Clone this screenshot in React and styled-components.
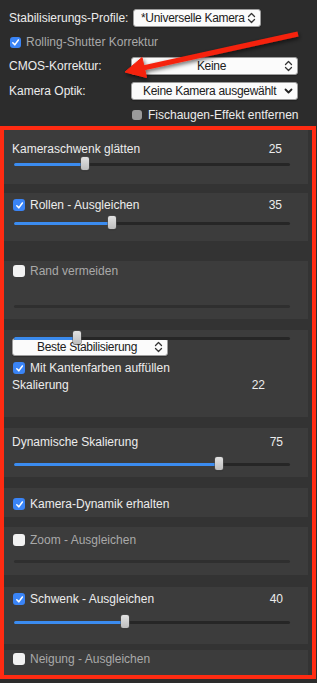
import React from 'react';
import styled, { createGlobalStyle } from 'styled-components';

const GlobalStyle = createGlobalStyle`
    body {
        margin: 0;
        background: #2c2c2c;
        font-family: "Liberation Sans", Arial, sans-serif;
        font-size: 12px;
    }
`;

const Page = styled.div`
    position: relative;
    width: 317px;
    height: 683px;
    background: #2c2c2c;
    overflow: hidden;
    color: #ececec;
`;

const Top = styled.div`
    display: flex;
    flex-direction: column;
    gap: 7px;
    height: 126px;
    padding: 9px 0 0 9px;
    box-sizing: border-box;
`;

const Row = styled.div`
    display: flex;
    align-items: center;
    height: ${p => p.$h || 18}px;
    padding-left: ${p => p.$indent || 0}px;
`;

const FieldLabel = styled.span`
    width: ${p => p.$w}px;
    flex-shrink: 0;
    white-space: nowrap;
`;

const Select = styled.div`
    display: flex;
    align-items: center;
    width: ${p => p.$w}px;
    height: 18px;
    box-sizing: border-box;
    padding: 0 4px 0 ${p => p.$pl || 7}px;
    background: #fbfbfb;
    border: 1px solid #9d9d9d;
    border-radius: 3px;
    color: #202020;
    letter-spacing: -0.3px;
    white-space: nowrap;
    overflow: hidden;
    box-shadow: 0 1px 1px rgba(0, 0, 0, 0.25);
`;

const SelectText = styled.span`
    flex: 1;
    min-width: 0;
    text-align: ${p => (p.$center ? 'center' : 'left')};
    overflow: hidden;
`;

const Box = styled.div`
    width: 316px;
    height: 553px;
    box-sizing: border-box;
    border: 4px solid #ff2b12;
    background: #333333;
    padding-right: 4px;
    display: flex;
    flex-direction: column;
`;

const Section = styled.div`
    flex-shrink: 0;
    height: ${p => p.$h}px;
    margin-top: ${p => p.$gap || 0}px;
    padding: ${p => p.$pt}px 0 0 8px;
    box-sizing: border-box;
    background: #3c3c3c;
    display: flex;
    flex-direction: column;
`;

const Header = styled.div`
    display: flex;
    align-items: center;
    justify-content: space-between;
    height: 16px;
    margin-top: ${p => p.$mt || 0}px;
    padding-right: ${p => (p.$pr === undefined ? 26 : p.$pr)}px;
    color: ${p => (p.$dim ? '#a9a9a9' : '#ececec')};
    white-space: nowrap;
`;

const Label = styled.span`
    display: flex;
    align-items: center;
    gap: 5px;
    color: ${p => (p.$dim ? '#a9a9a9' : 'inherit')};
`;

const SliderWrap = styled.div`
    position: relative;
    z-index: 1;
    display: flex;
    align-items: center;
    height: 14px;
    margin: ${p => p.$mt || 0}px 18px 0 2px;
`;

const Track = styled.div`
    flex: 1;
    height: 3px;
    border-radius: 2px;
    background: ${p => (p.$disabled ? '#2f2f2f' : '#262626')};
    overflow: hidden;
`;

const Fill = styled.div`
    height: 100%;
    background: #3b8cf0;
`;

const Thumb = styled.div`
    position: absolute;
    top: 0;
    width: 8px;
    height: 13px;
    box-sizing: border-box;
    border-radius: 2px;
    background: linear-gradient(#e2e2e2, #bdbdbd);
    box-shadow: 0 0 0 0.5px #555, 0 1px 1px rgba(0, 0, 0, 0.4);
`;

const Box12 = styled.span`
    display: inline-flex;
    align-items: center;
    justify-content: center;
    width: ${p => p.$size || 12}px;
    height: ${p => p.$size || 12}px;
    margin-left: ${p => p.$ml || 0}px;
    flex-shrink: 0;
    border-radius: 3px;
    background: ${p => (p.$checked ? '#3a84f6' : p.$gray ? '#9a9a9a' : '#f2f2f2')};
`;

const SelectRow = styled.div`
    margin-top: ${p => p.$mt || 0}px;
    position: relative;
`;

const ArrowLayer = styled.svg`
    position: absolute;
    left: 0;
    top: 0;
    pointer-events: none;
`;

function Check({ checked, gray, size, ml }) {
    return (
        <Box12 $checked={checked} $gray={gray} $size={size} $ml={ml}>
            {checked && (
                <svg width="9" height="9" viewBox="0 0 10 10">
                    <path d="M2 5.3 L4.2 7.6 L8.2 2.2" fill="none" stroke="#fff" strokeWidth="1.7" strokeLinecap="round" strokeLinejoin="round" />
                </svg>
            )}
        </Box12>
    );
}

function UpDown() {
    return (
        <svg width="9" height="12" viewBox="0 0 9 12">
            <path d="M1.5 4.5 L4.5 1.5 L7.5 4.5 M1.5 7.5 L4.5 10.5 L7.5 7.5" fill="none" stroke="#333" strokeWidth="1.3" strokeLinecap="round" strokeLinejoin="round" />
        </svg>
    );
}

function Down() {
    return (
        <svg width="9" height="8" viewBox="0 0 9 8">
            <path d="M1.5 2.5 L4.5 5.5 L7.5 2.5" fill="none" stroke="#222" strokeWidth="1.8" strokeLinecap="round" strokeLinejoin="round" />
        </svg>
    );
}

function Slider({ value, mt, disabled }) {
    return (
        <SliderWrap $mt={mt}>
            <Track $disabled={disabled}>
                {!disabled && <Fill style={{ width: `calc(${value}% - ${value * 0.08 - 4}px)` }} />}
            </Track>
            {!disabled && <Thumb style={{ left: `calc(${value}% - ${value * 0.08}px)` }} />}
        </SliderWrap>
    );
}

export default function App() {
    return (
        <Page>
            <GlobalStyle />
            <Top>
                <Row>
                    <FieldLabel $w={124}>Stabilisierungs-Profile:</FieldLabel>
                    <Select $w={128}>
                        <SelectText>*Universelle Kamera</SelectText>
                        <UpDown />
                    </Select>
                </Row>
                <Row $h={16}>
                    <Check checked size={11} ml={1} />
                    <Label $dim style={{ marginLeft: 5 }}>Rolling-Shutter Korrektur</Label>
                </Row>
                <Row>
                    <FieldLabel $w={122}>CMOS-Korrektur:</FieldLabel>
                    <Select $w={167}>
                        <SelectText $center>Keine</SelectText>
                        <UpDown />
                    </Select>
                </Row>
                <Row>
                    <FieldLabel $w={122}>Kamera Optik:</FieldLabel>
                    <Select $w={167} $pl={11}>
                        <SelectText>Keine Kamera ausgewählt</SelectText>
                        <Down />
                    </Select>
                </Row>
                <Row $h={16} $indent={123}>
                    <Check gray size={10} />
                    <Label style={{ marginLeft: 6 }}>Fischaugen-Effekt entfernen</Label>
                </Row>
            </Top>

            <Box>
                <Section $h={54} $pt={11}>
                    <Header>
                        <span>Kameraschwenk glätten</span>
                        <span>25</span>
                    </Header>
                    <Slider value={25} />
                </Section>

                <Section $h={48} $gap={9} $pt={4}>
                    <Header>
                        <Label><Check checked ml={1} />Rollen - Ausgleichen</Label>
                        <span>35</span>
                    </Header>
                    <Slider value={35} mt={3} />
                </Section>

                <Section $h={58} $gap={20} $pt={2}>
                    <Header $dim>
                        <Label><Check ml={1} />Rand vermeiden</Label>
                    </Header>
                    <Slider disabled mt={20} />
                </Section>

                <Section $h={87} $gap={11} $pt={1}>
                    <Slider value={22} />
                    <SelectRow $mt={-7}>
                        <Select $w={156}>
                            <SelectText $center>Beste Stabilisierung</SelectText>
                            <UpDown />
                        </Select>
                    </SelectRow>
                    <Header $mt={4}>
                        <Label><Check checked ml={1} />Mit Kantenfarben auffüllen</Label>
                    </Header>
                    <Header $mt={1} $pr={43}>
                        <span>Skalierung</span>
                        <span>22</span>
                    </Header>
                </Section>

                <Section $h={49} $gap={11} $pt={6}>
                    <Header $pr={25}>
                        <span>Dynamische Skalierung</span>
                        <span>75</span>
                    </Header>
                    <Slider value={75} mt={7} />
                </Section>

                <Section $h={29} $gap={11} $pt={8}>
                    <Header>
                        <Label><Check checked ml={1} />Kamera-Dynamik erhalten</Label>
                    </Header>
                </Section>

                <Section $h={48} $gap={10} $pt={5}>
                    <Header $dim>
                        <Label><Check ml={1} />Zoom - Ausgleichen</Label>
                    </Header>
                    <Slider disabled mt={6} />
                </Section>

                <Section $h={57} $gap={12} $pt={4}>
                    <Header $pr={25}>
                        <Label><Check checked ml={1} />Schwenk - Ausgleichen</Label>
                        <span>40</span>
                    </Header>
                    <Slider value={40} mt={8} />
                </Section>

                <Section $h={25} $gap={6} $pt={1}>
                    <Header $dim>
                        <Label><Check ml={1} />Neigung - Ausgleichen</Label>
                    </Header>
                </Section>
            </Box>

            <ArrowLayer width="317" height="130" viewBox="0 0 317 130">
                <defs>
                    <filter id="arrowShadow" x="-20%" y="-50%" width="140%" height="200%">
                        <feDropShadow dx="1" dy="2" stdDeviation="2" floodColor="#000" floodOpacity="0.6" />
                    </filter>
                </defs>
                <g filter="url(#arrowShadow)" fill="#f5230f" stroke="#f5230f">
                    <line x1="298" y1="34" x2="143" y2="68" strokeWidth="5" />
                    <polygon points="125,72 142,57.5 146.5,77.5" strokeWidth="1" strokeLinejoin="round" />
                </g>
            </ArrowLayer>
        </Page>
    );
}
